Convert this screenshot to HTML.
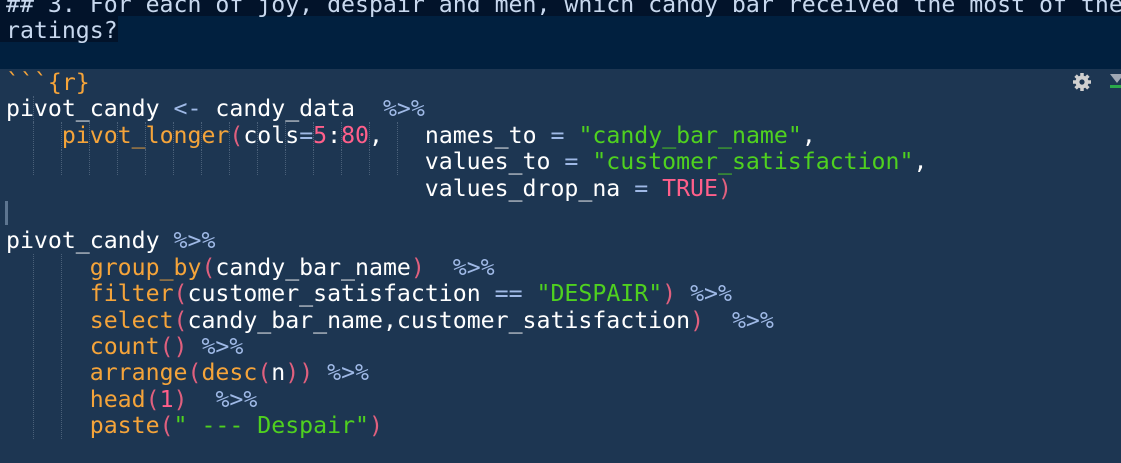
<!DOCTYPE html>
<html><head><meta charset="utf-8"><style>
html,body{margin:0;padding:0;width:1121px;height:463px;overflow:hidden;background:#1d3652;}
.hdr{position:absolute;left:0;top:0;width:1121px;height:69px;background:#01203f;}
.t{position:absolute;left:6px;font-family:"DejaVu Sans Mono","Liberation Mono",monospace;font-size:23.2px;white-space:pre;line-height:26.4px;color:#ffffff;}
.h1{position:absolute;left:0;top:0;width:1121px;height:16px;background:#02132a;}
.h2{position:absolute;left:0;top:16px;width:118px;height:26px;background:#02132a;}
.o{color:#f5a43a}.p{color:#e0607e}.n{color:#ff5f8a}.op{color:#9fb9e6}.s{color:#4fd11f}
.g{position:absolute;width:0;border-left:1px dotted #4a6079;height:26px;}
</style></head><body>
<div class="hdr"></div><div class="h1"></div><div class="h2"></div>
<div class="t" style="top:-8px;color:#c8d8ee">## 3. For each of joy, despair and men, which candy bar received the most of the
ratings?</div>
<div class="t" style="top:70px"><span class="o">&#96;&#96;&#96;{r}</span>
pivot_candy <span class="op">&lt;-</span> candy_data  <span class="op">%&gt;%</span>
    <span class="o">pivot_longer</span><span class="p">(</span>cols<span class="op">=</span><span class="n">5</span>:<span class="n">80</span>,   names_to <span class="op">=</span> <span class="s">"candy_bar_name"</span>,
                              values_to <span class="op">=</span> <span class="s">"customer_satisfaction"</span>,
                              values_drop_na <span class="op">=</span> <span class="n">TRUE</span><span class="p">)</span>

pivot_candy <span class="op">%&gt;%</span>
      <span class="o">group_by</span><span class="p">(</span>candy_bar_name<span class="p">)</span>  <span class="op">%&gt;%</span>
      <span class="o">filter</span><span class="p">(</span>customer_satisfaction <span class="op">==</span> <span class="s">"DESPAIR"</span><span class="p">)</span> <span class="op">%&gt;%</span>
      <span class="o">select</span><span class="p">(</span>candy_bar_name,customer_satisfaction<span class="p">)</span>  <span class="op">%&gt;%</span>
      <span class="o">count</span><span class="p">()</span> <span class="op">%&gt;%</span>
      <span class="o">arrange</span><span class="p">(</span><span class="o">desc</span><span class="p">(</span>n<span class="p">))</span> <span class="op">%&gt;%</span>
      <span class="o">head</span><span class="p">(</span><span class="n">1</span><span class="p">)</span>  <span class="op">%&gt;%</span>
      <span class="o">paste</span><span class="p">(</span><span class="s">" --- Despair"</span><span class="p">)</span></div>
<div style="position:absolute;left:5px;top:201px;width:3px;height:24px;background:#5d7590"></div>
<div class="g" style="left:33px;top:96px"></div>
<div class="g" style="left:33px;top:122px"></div><div class="g" style="left:61px;top:122px"></div><div class="g" style="left:89px;top:122px"></div><div class="g" style="left:117px;top:122px"></div><div class="g" style="left:145px;top:122px"></div><div class="g" style="left:173px;top:122px"></div><div class="g" style="left:201px;top:122px"></div><div class="g" style="left:229px;top:122px"></div><div class="g" style="left:257px;top:122px"></div><div class="g" style="left:285px;top:122px"></div><div class="g" style="left:313px;top:122px"></div><div class="g" style="left:341px;top:122px"></div><div class="g" style="left:369px;top:122px"></div><div class="g" style="left:397px;top:122px"></div>
<div class="g" style="left:33px;top:149px"></div><div class="g" style="left:61px;top:149px"></div><div class="g" style="left:89px;top:149px"></div><div class="g" style="left:117px;top:149px"></div><div class="g" style="left:145px;top:149px"></div><div class="g" style="left:173px;top:149px"></div><div class="g" style="left:201px;top:149px"></div><div class="g" style="left:229px;top:149px"></div><div class="g" style="left:257px;top:149px"></div><div class="g" style="left:285px;top:149px"></div><div class="g" style="left:313px;top:149px"></div><div class="g" style="left:341px;top:149px"></div><div class="g" style="left:369px;top:149px"></div><div class="g" style="left:397px;top:149px"></div>
<div class="g" style="left:33px;top:254px;height:185px"></div><div class="g" style="left:61px;top:254px;height:185px"></div>
<svg style="position:absolute;left:1070px;top:70px" width="24" height="24" viewBox="0 0 24 24"><g fill="#d0d0d0"><circle cx="12" cy="12" r="6.5"/><g stroke="#d0d0d0" stroke-width="3.5"><line x1="12" y1="3" x2="12" y2="21"/><line x1="3" y1="12" x2="21" y2="12"/><line x1="5.6" y1="5.6" x2="18.4" y2="18.4"/><line x1="18.4" y1="5.6" x2="5.6" y2="18.4"/></g></g><circle cx="12" cy="12" r="2.6" fill="#1d3652"/></svg>
<div style="position:absolute;left:1110px;top:74px;width:0;height:0;border-left:7px solid transparent;border-right:7px solid transparent;border-top:9px solid #a0a8b4"></div>
<div style="position:absolute;left:1110px;top:85px;width:14px;height:3px;background:#2aa84a"></div>
</body></html>
